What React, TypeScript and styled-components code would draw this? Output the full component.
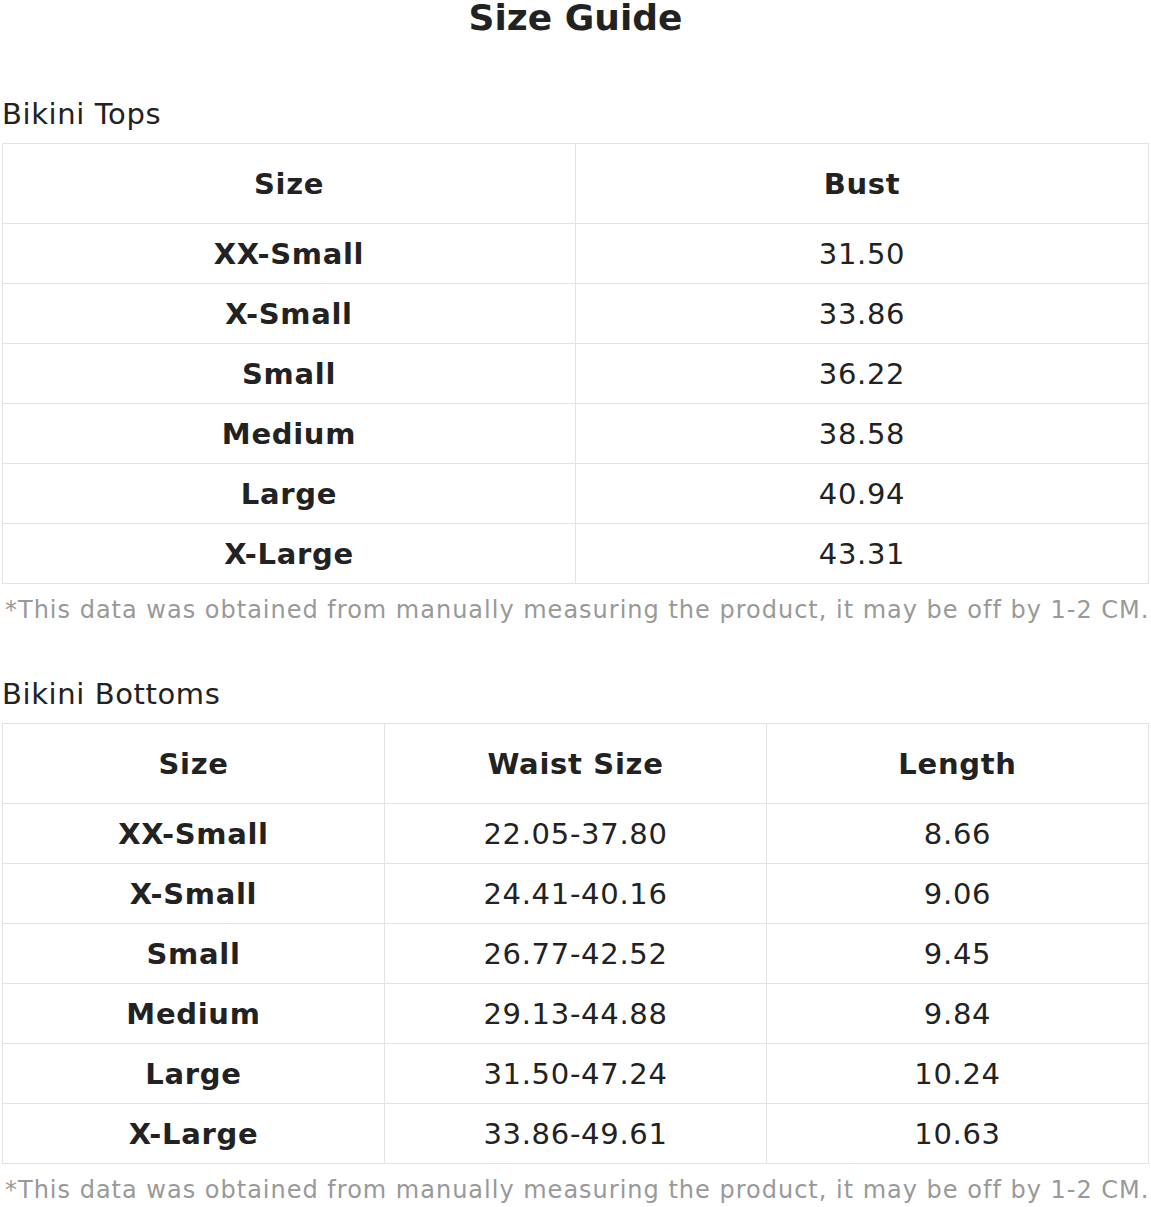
import styled, { createGlobalStyle } from 'styled-components'

const GlobalStyle = createGlobalStyle`
  html, body {
    margin: 0;
    padding: 0;
    background: #ffffff;
  }
  body {
    font-family: 'DejaVu Sans', 'Liberation Sans', sans-serif;
    color: #222222;
  }
`

interface SizeTable {
  title: string
  columns: string[]
  rows: string[][]
}

const tables: SizeTable[] = [
  {
    title: 'Bikini Tops',
    columns: ['Size', 'Bust'],
    rows: [
      ['XX-Small', '31.50'],
      ['X-Small', '33.86'],
      ['Small', '36.22'],
      ['Medium', '38.58'],
      ['Large', '40.94'],
      ['X-Large', '43.31'],
    ],
  },
  {
    title: 'Bikini Bottoms',
    columns: ['Size', 'Waist Size', 'Length'],
    rows: [
      ['XX-Small', '22.05-37.80', '8.66'],
      ['X-Small', '24.41-40.16', '9.06'],
      ['Small', '26.77-42.52', '9.45'],
      ['Medium', '29.13-44.88', '9.84'],
      ['Large', '31.50-47.24', '10.24'],
      ['X-Large', '33.86-49.61', '10.63'],
    ],
  },
]

const NOTE = '*This data was obtained from manually measuring the product, it may be off by 1-2 CM.'

export default function App() {
  return (
    <>
      <GlobalStyle />
      <Page>
        <Title>Size Guide</Title>
        {tables.map((table) => (
          <Section key={table.title}>
            <SectionTitle>{table.title}</SectionTitle>
            <Table>
              <thead>
                <tr>
                  {table.columns.map((col) => (
                    <HeadCell key={col}>{col}</HeadCell>
                  ))}
                </tr>
              </thead>
              <tbody>
                {table.rows.map((row) => (
                  <tr key={row[0]}>
                    {row.map((value, i) => (
                      <Cell key={i} $strong={i === 0}>
                        {value}
                      </Cell>
                    ))}
                  </tr>
                ))}
              </tbody>
            </Table>
            <Note>{NOTE}</Note>
          </Section>
        ))}
      </Page>
    </>
  )
}

const Page = styled.div`
  display: flex;
  flex-direction: column;
  width: 100%;
  padding: 0 2px 0 2px;
  box-sizing: border-box;
`

const Title = styled.h1`
  margin: 0;
  font-size: 36px;
  line-height: 36px;
  font-weight: 700;
  text-align: center;
  color: #222222;
`

const Section = styled.section`
  display: flex;
  flex-direction: column;
  margin-top: 58px;

  & + & {
    margin-top: 38px;
  }
`

const SectionTitle = styled.h2`
  margin: 0 0 9px 0;
  font-size: 29px;
  line-height: 40px;
  font-weight: 400;
  letter-spacing: 0.6px;
  color: #222222;
`

const Table = styled.table`
  width: 100%;
  border-collapse: collapse;
  table-layout: fixed;
`

const HeadCell = styled.th`
  height: 79px;
  padding: 0;
  border: 1px solid #e3e3e3;
  font-size: 29px;
  font-weight: 700;
  letter-spacing: 0.7px;
  text-align: center;
  color: #222222;
`

const Cell = styled.td<{ $strong?: boolean }>`
  height: 59px;
  padding: 0;
  border: 1px solid #e3e3e3;
  font-size: 29px;
  font-weight: ${({ $strong }) => ($strong ? 700 : 400)};
  letter-spacing: 0.7px;
  text-align: center;
  color: #222222;
`

const Note = styled.p`
  margin: 0 0 0 3px;
  font-size: 24px;
  line-height: 52px;
  letter-spacing: 1px;
  color: #999999;
  white-space: nowrap;
`
